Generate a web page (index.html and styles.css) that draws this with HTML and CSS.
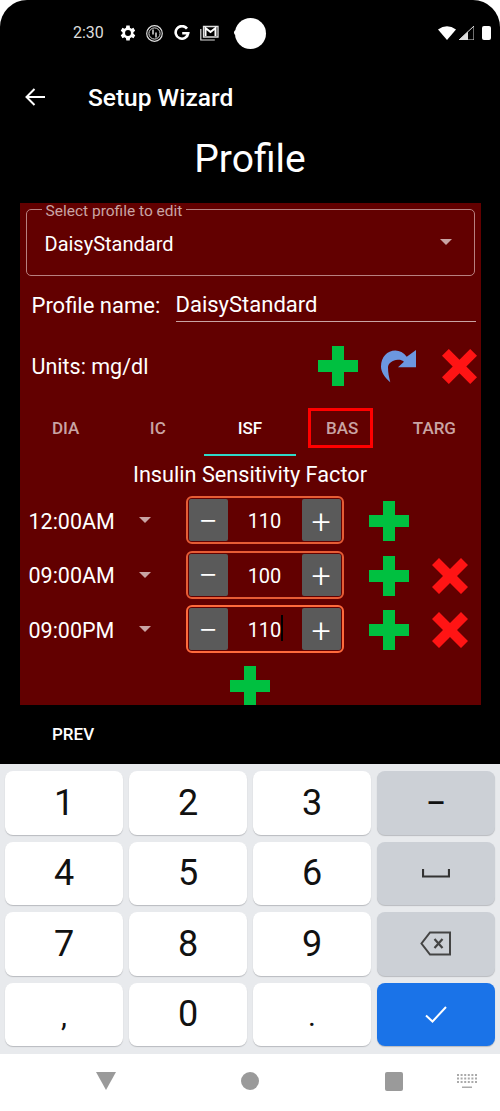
FILE: index.html
```html
<!DOCTYPE html>
<html lang="en">
<head>
  <meta charset="UTF-8">
  <meta name="viewport" content="width=device-width, initial-scale=1.0">
  <title>Setup Wizard</title>
  <link rel="stylesheet" href="styles.css">
</head>
<body>
  <svg class="defs" width="0" height="0">
    <symbol id="plus" viewBox="0 0 40 40"><path d="M14 0h12v14h14v12H26v14H14V26H0V14h14z" fill="#00c040"/></symbol>
    <symbol id="cross" viewBox="0 0 36 36"><path d="M7 0l11 11L29 0l7 7-11 11 11 11-7 7-11-11L7 36l-7-7 11-11L0 7z" fill="#ff1414"/></symbol>
  </svg>

  <div class="screen">
    <div class="status">
      <span class="clock">2:30</span>
      <svg class="st-icon gear" width="16" height="16" viewBox="3.500 2.500 19 19"><path fill="#fff" d="M19.400 13a7.500 7.500 0 0 0 0-2l2.100-1.600-2-3.500-2.500 1a7.500 7.500 0 0 0-1.700-1L15 3.200h-4l-.4 2.700a7.500 7.500 0 0 0-1.700 1l-2.500-1-2 3.500L6.500 11a7.500 7.500 0 0 0 0 2l-2.100 1.600 2 3.500 2.500-1a7.500 7.500 0 0 0 1.700 1l.4 2.700h4l.4-2.700a7.500 7.500 0 0 0 1.700-1l2.500 1 2-3.500zM13 15.500a3.500 3.500 0 1 1 0-7 3.500 3.500 0 0 1 0 7z"/></svg>
      <svg class="st-icon sync" width="17" height="17" viewBox="0 0 17 17" fill="none" stroke="#ddd"><circle cx="8.500" cy="8.500" r="7.800" stroke-width="1.200"/><circle cx="8.500" cy="8.500" r="5.600" stroke-width="1"/><path d="M7 4.500v5M10 7.500v5" stroke-width="1.500"/></svg>
      <svg class="st-icon glogo" width="16" height="16" viewBox="0 0 16 16" fill="none" stroke="#fff" stroke-width="2.600"><path d="M13 3.600A6.300 6.300 0 1 0 14.200 8.300H8.200"/></svg>
      <svg class="st-icon mail" width="19" height="16" viewBox="0 0 19 16" fill="none" stroke="#ddd"><path d="M3.500 1.500h14.500v10.500H3.500z" stroke-width="1.300"/><path d="M.8 4v11h14" stroke-width="1.200"/><path d="M5.500 11V3l5 4 5-4v8" stroke="#fff" stroke-width="2"/></svg>
      <span class="camera"></span>
      <div class="st-right">
        <svg width="18" height="14" viewBox="0 0 18 14"><path d="M0 3.500Q9-3 18 3.500L9 14z" fill="#fff"/></svg>
        <svg width="15" height="14" viewBox="0 0 15 14"><path d="M0 14L15 0v14z" fill="none" stroke="#ddd"/><path d="M0 14l9-8.500V14z" fill="#ddd"/></svg>
        <span class="battery"></span>
      </div>
    </div>

    <div class="toolbar">
      <svg class="back" width="20" height="18" viewBox="0 0 20 18" fill="none" stroke="#fff" stroke-width="2"><path d="M20 9H2M9.500 1L1.500 9l8 8"/></svg>
      <span class="toolbar-title">Setup Wizard</span>
    </div>

    <h1 class="page-title">Profile</h1>

    <main class="panel">
      <div class="select-box">
        <label class="select-label">Select profile to edit</label>
        <span class="select-value">DaisyStandard</span>
        <i class="caret"></i>
      </div>

      <div class="name-row">
        <span class="name-label">Profile name:</span>
        <span class="name-input">DaisyStandard</span>
      </div>

      <div class="units-row">
        <span class="units">Units: mg/dl</span>
        <div class="units-actions">
          <svg width="40" height="40"><use href="#plus"/></svg>
          <svg class="clone" width="35" height="33" viewBox="0 0 34 32"><path d="M9 31.300C3 26 0 21 0 16 0 7 6 .5 14 .5c4 0 8 2 11 6L34 0v16.700H16.500l5.800-5.400c-2-1.500-4-2-6-1.800-5 .5-9.500 3.500-9.500 7.500 0 5 1 9.500 2.200 14.300z" fill="#6c97e0"/></svg>
          <svg class="del" width="35" height="35"><use href="#cross"/></svg>
        </div>
      </div>

      <nav class="tabs">
        <span class="tab">DIA</span>
        <span class="tab">IC</span>
        <span class="tab tab-active">ISF</span>
        <span class="tab tab-marked"><b>BAS</b></span>
        <span class="tab">TARG</span>
      </nav>

      <h2 class="tab-heading">Insulin Sensitivity Factor</h2>

      <div class="rows">
        <div class="isf-row">
          <span class="time">12:00AM</span>
          <i class="caret"></i>
          <div class="stepper"><span class="step">&minus;</span><span class="value">110</span><span class="step">+</span></div>
          <svg class="row-add" width="40" height="40"><use href="#plus"/></svg>
        </div>
        <div class="isf-row">
          <span class="time">09:00AM</span>
          <i class="caret"></i>
          <div class="stepper"><span class="step">&minus;</span><span class="value">100</span><span class="step">+</span></div>
          <svg class="row-add" width="40" height="40"><use href="#plus"/></svg>
          <svg class="row-del" width="36" height="36"><use href="#cross"/></svg>
        </div>
        <div class="isf-row">
          <span class="time">09:00PM</span>
          <i class="caret"></i>
          <div class="stepper stepper-focus"><span class="step">&minus;</span><span class="value">110<i class="cursor"></i></span><span class="step">+</span></div>
          <svg class="row-add" width="40" height="40"><use href="#plus"/></svg>
          <svg class="row-del" width="36" height="36"><use href="#cross"/></svg>
        </div>
      </div>

      <div class="add-row"><svg width="40" height="40"><use href="#plus"/></svg></div>
    </main>

    <div class="wizard-nav">PREV</div>

    <div class="keyboard">
      <div class="keys">
        <span class="key">1</span><span class="key">2</span><span class="key">3</span>
        <span class="key key-fn">&ndash;</span>
        <span class="key">4</span><span class="key">5</span><span class="key">6</span>
        <span class="key key-fn"><svg width="28" height="9" viewBox="0 0 28 9" fill="none" stroke="#333" stroke-width="2.200"><path d="M1 0v7.500h26V0"/></svg></span>
        <span class="key">7</span><span class="key">8</span><span class="key">9</span>
        <span class="key key-fn"><svg width="32" height="25" viewBox="0 0 32 25" fill="none" stroke="#444" stroke-width="2"><path d="M10 1.500h20v22H10L1.500 12.500z"/><path d="M14.500 8l8 9M22.500 8l-8 9" stroke-width="2.200"/></svg></span>
        <span class="key key-mark">,</span><span class="key">0</span><span class="key key-mark">.</span>
        <span class="key key-go"><svg width="22" height="17" viewBox="0 0 22 17" fill="none" stroke="#fff" stroke-width="2"><path d="M1 9.500l6.500 6L21 1"/></svg></span>
      </div>
    </div>

    <div class="navbar">
      <span class="nav-back"></span>
      <span class="nav-home"></span>
      <span class="nav-recent"></span>
      <svg class="nav-kbd" width="20" height="15" viewBox="0 0 20 15" fill="#aaa"><path d="M0 0h2v2H0zM3.600 0h2v2h-2zM7.200 0h2v2h-2zM10.800 0h2v2h-2zM14.400 0h2v2h-2zM18 0h2v2h-2zM0 3.500h2v2H0zM3.600 3.500h2v2h-2zM7.200 3.500h2v2h-2zM10.800 3.500h2v2h-2zM14.400 3.500h2v2h-2zM18 3.500h2v2h-2zM0 7h2v2H0zM3.600 7h2v2h-2zM7.200 7h2v2h-2zM10.800 7h2v2h-2zM14.400 7h2v2h-2zM18 7h2v2h-2zM5 12.500h10V14H5z"/></svg>
    </div>
  </div>
</body>
</html>
```

FILE: styles.css
```css
* {
  box-sizing: border-box;
}

body {
  margin: 0;
  background: #fff;
  font-family: Roboto, "Liberation Sans", sans-serif;
  color: #fff;
}

.defs {
  position: absolute;
}

.screen {
  width: 500px;
  height: 1111px;
  overflow: hidden;
  background: #000;
  border-radius: 27px 27px 0 0;
  display: flex;
  flex-direction: column;
}

/* status bar */
.status {
  height: 66px;
  display: flex;
  align-items: center;
  padding: 0 9px 0 73px;
}

.clock {
  font-size: 16px;
  color: #ddd;
  width: 47px;
  margin-top: -2px;
}

.st-icon {
  flex: none;
}

.gear {
  margin-right: 10px;
}

.sync {
  margin-right: 11px;
}

.glogo {
  margin-right: 10px;
}

.camera {
  width: 31px;
  height: 31px;
  margin-left: 16px;
  background: #fff;
  border-radius: 50%;
  position: relative;
}

.camera::before {
  content: "";
  position: absolute;
  left: -1px;
  top: 12px;
  width: 5px;
  height: 5px;
  background: #fff;
  border-radius: 50%;
}

.st-right {
  margin-left: auto;
  display: flex;
  align-items: center;
  gap: 3px;
}

.battery {
  width: 9px;
  height: 14px;
  margin-left: 5px;
  background: #fff;
  border-radius: 2px;
}

/* toolbar */
.toolbar {
  height: 62px;
  display: flex;
  align-items: center;
  padding-left: 25px;
}

.back {
  margin-right: 43px;
}

.toolbar-title {
  font-size: 24.500px;
  font-weight: 500;
}

.page-title {
  margin: 0;
  height: 75px;
  font-size: 39px;
  font-weight: 400;
  line-height: 62px;
  text-align: center;
}

/* red panel */
.panel {
  width: 461px;
  height: 502px;
  margin: 0 auto;
  padding: 6px 6px 0;
  background: #620000;
  overflow: hidden;
}

.select-box {
  height: 67px;
  padding: 2px 22px 0 18px;
  border: 1.500px solid #b88080;
  border-radius: 5px;
  display: flex;
  align-items: center;
  justify-content: space-between;
  position: relative;
}

.select-value {
  font-size: 20px;
}

.select-label {
  position: absolute;
  left: 15px;
  top: -8px;
  padding: 0 4px;
  background: #620000;
  font-size: 15.500px;
  line-height: 18px;
  color: #c9a4a4;
}

.caret {
  display: block;
  width: 0;
  height: 0;
  border-style: solid;
  border-color: #c9a4a4 transparent transparent;
  border-width: 6px 6px 0;
}

.select-box .caret {
  margin-top: -4px;
}

.name-row {
  height: 58px;
  display: flex;
  align-items: center;
  padding-left: 6px;
  font-size: 22px;
}

.name-label {
  width: 144px;
}

.name-input {
  flex: 1;
  margin-right: -1px;
  padding: 2px 0 2px;
  border-bottom: 1.500px solid #c9a4a4;
  line-height: 28px;
}

.units-row {
  height: 64px;
  display: flex;
  align-items: center;
  padding-left: 6px;
  font-size: 21.500px;
}

.units-actions {
  margin-left: auto;
  display: flex;
  align-items: center;
  gap: 23px;
  margin-right: -2px;
}

.units-actions .del {
  margin-left: 3px;
}

.tabs {
  width: 461px;
  height: 58px;
  margin: 0 -6px;
  display: grid;
  grid-template-columns: repeat(5, 1fr);
}

.tab {
  display: flex;
  align-items: center;
  justify-content: center;
  padding-top: 4px;
  border-bottom: 2px solid transparent;
  font-size: 17px;
  font-weight: 500;
  color: #c9a4a4;
}

.tab-active {
  color: #fff;
  border-bottom-color: #2fd8c8;
}

.tab-marked b {
  font-weight: 500;
  width: 65px;
  height: 40px;
  margin-right: 3px;
  padding-left: 3px;
  border: 3px solid #f00;
  display: flex;
  align-items: center;
  justify-content: center;
}

.tab-heading {
  margin: 0;
  height: 38px;
  font-size: 21.700px;
  font-weight: 400;
  line-height: 38px;
  text-align: center;
}

.rows {
  display: flex;
  flex-direction: column;
  gap: 6.670px;
  margin-top: 2px;
}

.isf-row {
  height: 48px;
  display: flex;
  align-items: center;
  font-size: 21.500px;
}

.time {
  width: 113px;
  padding: 2px 0 0 3px;
}

.isf-row .caret {
  margin-right: 35px;
}

.stepper {
  width: 158px;
  height: 48px;
  padding: 1px;
  border: 2px solid #e65c35;
  border-radius: 6px;
  display: flex;
  align-items: center;
}

.stepper-focus {
  border-color: #ff6a3c;
}

.step {
  width: 39px;
  height: 100%;
  padding-top: 1px;
  background: #5a5a5a;
  border-radius: 2px;
  display: flex;
  align-items: center;
  justify-content: center;
  font-size: 34px;
  font-weight: 300;
}

.value {
  flex: 1;
  padding-top: 2px;
  font-size: 20px;
  text-align: center;
  position: relative;
}

.cursor {
  position: absolute;
  width: 2px;
  height: 26px;
  top: -1px;
  background: #000;
}

.row-add {
  margin: 2px 0 0 25.500px;
}

.row-del {
  margin: 2px 0 0 23px;
}

.add-row {
  display: flex;
  justify-content: center;
  margin-top: 13px;
}

.wizard-nav {
  height: 59px;
  padding: 19px 0 0 52px;
  font-size: 17px;
  font-weight: 500;
}

/* keyboard */
.keyboard {
  height: 290px;
  padding: 7px 5px 0;
  background: #e8eaed;
  color: #111;
}

.keys {
  display: grid;
  grid-template-columns: repeat(4, 118px);
  grid-auto-rows: 63.500px;
  column-gap: 6px;
  row-gap: 7px;
}

.key {
  display: flex;
  align-items: center;
  justify-content: center;
  background: #fff;
  border-radius: 8px;
  box-shadow: 0 1px 1px #b9bbbf;
  font-size: 36px;
  font-weight: 400;
}

.key-mark {
  padding-top: 2px;
  font-size: 30px;
}

.key-fn {
  background: #ccd0d6;
  font-size: 30px;
  font-weight: 500;
}

.key-go {
  background: #1a73e8;
}

.navbar {
  flex: 1;
  background: #fff;
  display: flex;
  align-items: center;
  padding: 0 0 3px 96px;
}

.nav-back {
  width: 0;
  height: 0;
  border: 10px solid transparent;
  border-top: 18px solid #9a9a9a;
  border-bottom: 0;
}

.nav-home {
  width: 18px;
  height: 18px;
  margin-left: 125px;
  background: #9a9a9a;
  border-radius: 50%;
}

.nav-recent {
  width: 18px;
  height: 19px;
  margin-left: 126px;
  background: #9a9a9a;
  border-radius: 2px;
}

.nav-kbd {
  margin-left: 54px;
}
```
